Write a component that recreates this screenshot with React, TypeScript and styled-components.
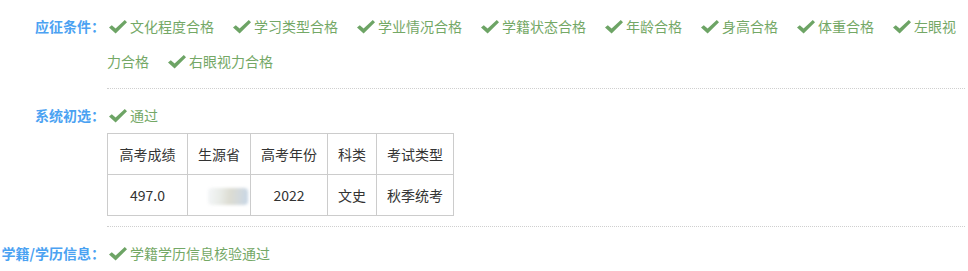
import React from "react";
import styled, { createGlobalStyle } from "styled-components";

const GlobalStyle = createGlobalStyle`
  html, body {
    margin: 0;
    padding: 0;
    background: #fff;
  }
  body {
    font-family: "Noto Sans CJK SC", "Noto Sans", sans-serif;
    font-size: 14px;
  }
`;

const Wrapper = styled.div`
  width: 968px;
`;

const Row = styled.div`
  display: grid;
  grid-template-columns: 105px 1fr;
  column-gap: 2px;
`;

const Label = styled.div`
  text-align: right;
  white-space: nowrap;
  font-size: 14px;
  font-weight: 700;
  color: #4ba2f2;
  line-height: 35px;
  padding-top: 9px;
`;

const Content = styled.div<{ $bottom: number; $last?: boolean }>`
  padding: 9px 0 ${(p) => p.$bottom}px 0;
  border-bottom: ${(p) => (p.$last ? "none" : "1px dotted #cfcfcf")};
  margin-right: 3px;
`;

const Lines = styled.div`
  line-height: 35px;
  color: #74a866;
  font-size: 14px;
`;

const Check = styled.svg<{ $lead?: boolean }>`
  width: 18px;
  height: 14px;
  margin: 0 3px 0 ${(p) => (p.$lead ? 19 : 2)}px;
  vertical-align: -2px;
`;

const Table = styled.table`
  border-collapse: collapse;
  font-size: 14px;
  color: #333;
  text-align: center;
`;

const Cell = styled.td<{ $w: number }>`
  width: ${(p) => p.$w}px;
  height: 41px;
  padding: 0;
  border: 1px solid #cccccc;
  box-sizing: border-box;
`;

const Smudge = styled.span`
  display: inline-block;
  width: 40px;
  height: 17px;
  margin-left: 18px;
  vertical-align: middle;
  border-radius: 4px;
  background: linear-gradient(
    95deg,
    #f4f6f8 0%,
    #e9ece8 30%,
    #dcdcd2 55%,
    #d3d9dc 78%,
    #c6d6e6 100%
  );
  filter: blur(1.5px);
`;

const CheckIcon: React.FC<{ lead?: boolean }> = ({ lead }) => (
  <Check viewBox="0 0 18 14" $lead={lead}>
    <polygon
      points="0,7.6 2.8,5.2 6.6,8.6 15.8,0 18,2.2 6.6,13.6"
      fill="#6da465"
    />
  </Check>
);

const conditions = [
  "文化程度合格",
  "学习类型合格",
  "学业情况合格",
  "学籍状态合格",
  "年龄合格",
  "身高合格",
  "体重合格",
  "左眼视力合格",
  "右眼视力合格",
];

const headers = ["高考成绩", "生源省", "高考年份", "科类", "考试类型"];
const widths = [80, 63, 77, 49, 77];

const App: React.FC = () => {
  return (
    <Wrapper>
      <GlobalStyle />
      <Row>
        <Label>应征条件：</Label>
        <Content $bottom={9}>
          <Lines>
            {conditions.map((c, i) => (
              <React.Fragment key={c}>
                <CheckIcon lead={i > 0} />
                {c}
              </React.Fragment>
            ))}
          </Lines>
        </Content>
      </Row>
      <Row>
        <Label>系统初选：</Label>
        <Content $bottom={10}>
          <Lines>
            <CheckIcon />
            通过
          </Lines>
          <Table>
            <tbody>
              <tr>
                {headers.map((h, i) => (
                  <Cell key={h} $w={widths[i]}>
                    {h}
                  </Cell>
                ))}
              </tr>
              <tr>
                <Cell $w={widths[0]}>497.0</Cell>
                <Cell $w={widths[1]}>
                  <Smudge />
                </Cell>
                <Cell $w={widths[2]}>2022</Cell>
                <Cell $w={widths[3]}>文史</Cell>
                <Cell $w={widths[4]}>秋季统考</Cell>
              </tr>
            </tbody>
          </Table>
        </Content>
      </Row>
      <Row>
        <Label>学籍/学历信息：</Label>
        <Content $bottom={0} $last>
          <Lines>
            <CheckIcon />
            学籍学历信息核验通过
          </Lines>
        </Content>
      </Row>
    </Wrapper>
  );
};

export default App;
